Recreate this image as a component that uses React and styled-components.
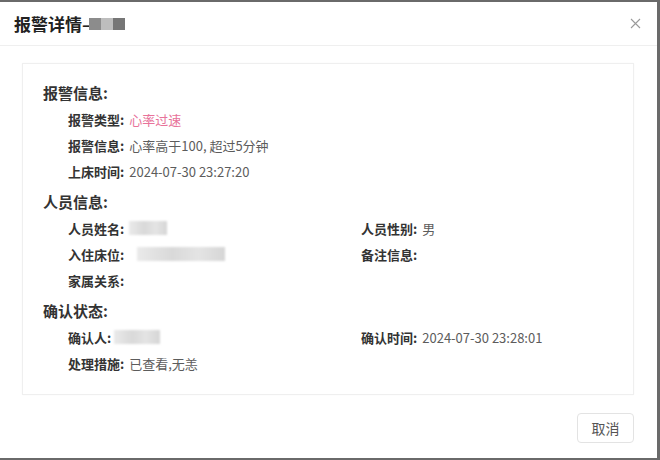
import React from 'react';
import styled, { createGlobalStyle } from 'styled-components';

const GlobalStyle = createGlobalStyle`
  html, body {
    margin: 0;
    padding: 0;
    background: #6a6a6a;
  }
  body {
    font-family: "Noto Sans CJK SC", "Noto Sans", "Liberation Sans", sans-serif;
  }
`;

const Modal = styled.div`
  width: 657px;
  height: 456px;
  margin-top: 2px;
  background: #fff;
  display: flex;
  flex-direction: column;
  box-sizing: border-box;
`;

const Header = styled.div`
  height: 43px;
  flex: none;
  display: flex;
  align-items: center;
  justify-content: space-between;
  padding: 0 16px 0 14px;
  border-bottom: 1px solid #efefef;
`;

const Title = styled.div`
  display: flex;
  align-items: center;
  font-size: 17px;
  font-weight: 700;
  color: #222;
  line-height: 20px;
`;

const Masked = styled.span`
  display: inline-flex;
  margin-left: -2px;
`;

const MaskCell = styled.span`
  width: 12px;
  height: 12px;
  background: ${(p) => p.tone};
`;

const CloseBtn = styled.button`
  background: none;
  border: none;
  padding: 0;
  cursor: pointer;
  display: flex;
  color: #9a9a9a;
`;

const Body = styled.div`
  flex: 1;
  padding: 17px 23px 0 22px;
  display: flex;
  flex-direction: column;
`;

const Card = styled.div`
  height: 332px;
  box-sizing: border-box;
  border: 1px solid #efefef;
  box-shadow: 0 0 2px rgba(0, 0, 0, 0.03);
  padding: 16px 20px 0 20px;
`;

const Section = styled.div`
  & + & {
    margin-top: 5px;
  }
`;

const SectionTitle = styled.div`
  height: 26px;
  line-height: 26px;
  font-size: 15px;
  font-weight: 700;
  color: #333;
`;

const Grid = styled.div`
  display: grid;
  grid-template-columns: 293px 1fr;
  padding-left: 25px;
`;

const Item = styled.div`
  grid-column: ${(p) => (p.full ? '1 / -1' : 'auto')};
  height: 26px;
  display: flex;
  align-items: center;
  font-size: 13px;
`;

const Label = styled.span`
  font-weight: 700;
  color: #333;
  margin-right: 5px;
  white-space: nowrap;
`;

const Value = styled.span`
  color: ${(p) => (p.alert ? '#e8739a' : '#5c5c5c')};
  white-space: nowrap;
`;

const Blur = styled.span`
  display: inline-block;
  width: ${(p) => p.w}px;
  height: 14px;
  margin-left: ${(p) => p.offset || 0}px;
  background: linear-gradient(90deg, #eaeaea 0%, #d9d9d9 40%, #e4e4e4 70%, #d6d6d6 100%);
  filter: blur(1.2px);
`;

const Footer = styled.div`
  flex: none;
  display: flex;
  justify-content: flex-end;
  padding: 18px 23px 15px 0;
`;

const Button = styled.button`
  width: 57px;
  height: 30px;
  border: 1px solid #e3e3e3;
  border-radius: 4px;
  background: #fff;
  color: #555;
  font-family: inherit;
  font-size: 14px;
  cursor: pointer;
`;

const CloseIcon = () => (
  <svg width="11" height="11" viewBox="0 0 11 11">
    <path d="M1 1 L10 10 M10 1 L1 10" stroke="currentColor" strokeWidth="1.1" />
  </svg>
);

const sections = [
  {
    title: '报警信息:',
    items: [
      { label: '报警类型:', value: '心率过速', alert: true, full: true },
      { label: '报警信息:', value: '心率高于100, 超过5分钟', full: true },
      { label: '上床时间:', value: '2024-07-30 23:27:20', full: true },
    ],
  },
  {
    title: '人员信息:',
    items: [
      { label: '人员姓名:', blur: 38 },
      { label: '人员性别:', value: '男' },
      { label: '入住床位:', blur: 88, offset: 8 },
      { label: '备注信息:' },
      { label: '家属关系:', full: true },
    ],
  },
  {
    title: '确认状态:',
    items: [
      { label: '确认人:', blur: 46, offset: -2 },
      { label: '确认时间:', value: '2024-07-30 23:28:01' },
      { label: '处理措施:', value: '已查看,无恙', full: true },
    ],
  },
];

export default function App() {
  return (
    <>
      <GlobalStyle />
      <Modal>
        <Header>
          <Title>
            报警详情–
            <Masked>
              <MaskCell tone="#8c8c8c" />
              <MaskCell tone="#bdbdbd" />
              <MaskCell tone="#767676" />
            </Masked>
          </Title>
          <CloseBtn aria-label="关闭">
            <CloseIcon />
          </CloseBtn>
        </Header>
        <Body>
          <Card>
            {sections.map((s) => (
              <Section key={s.title}>
                <SectionTitle>{s.title}</SectionTitle>
                <Grid>
                  {s.items.map((it) => (
                    <Item key={it.label} full={it.full}>
                      <Label>{it.label}</Label>
                      {it.blur ? (
                        <Blur w={it.blur} offset={it.offset} />
                      ) : (
                        <Value alert={it.alert}>{it.value}</Value>
                      )}
                    </Item>
                  ))}
                </Grid>
              </Section>
            ))}
          </Card>
        </Body>
        <Footer>
          <Button>取消</Button>
        </Footer>
      </Modal>
    </>
  );
}
